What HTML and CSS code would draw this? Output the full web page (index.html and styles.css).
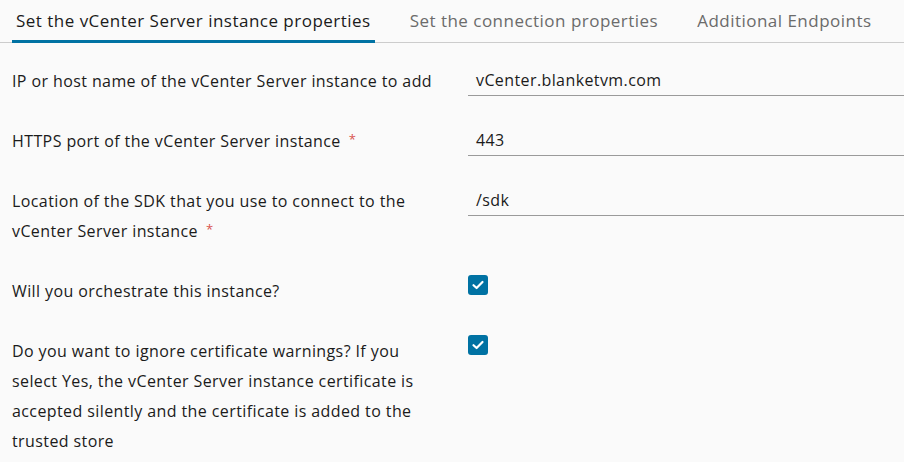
FILE: index.html
```html
<!DOCTYPE html>
<html lang="en">
<head>
<meta charset="utf-8">
<title>Add vCenter Server instance</title>
<link rel="stylesheet" href="styles.css">
</head>
<body>
<div class="page">
  <nav class="tabs">
    <div class="tab active">Set the vCenter Server instance properties</div>
    <div class="tab">Set the connection properties</div>
    <div class="tab">Additional Endpoints</div>
  </nav>
  <form class="form">
    <div class="row">
      <label class="label">IP or host name of the vCenter Server instance to add</label>
      <div class="control"><div class="input">vCenter.blanketvm.com</div></div>
    </div>
    <div class="row">
      <label class="label">HTTPS port of the vCenter Server instance<span class="req">*</span></label>
      <div class="control"><div class="input">443</div></div>
    </div>
    <div class="row">
      <label class="label">Location of the SDK that you use to connect to the vCenter Server instance<span class="req">*</span></label>
      <div class="control"><div class="input">/sdk</div></div>
    </div>
    <div class="row">
      <label class="label">Will you orchestrate this instance?</label>
      <div class="control"><span class="checkbox"><svg viewBox="0 0 20 20" width="20" height="20"><path d="M5.5 10.2 L8.6 13 L14.5 7" fill="none" stroke="#fff" stroke-width="2.2" stroke-linecap="round" stroke-linejoin="round"/></svg></span></div>
    </div>
    <div class="row">
      <label class="label">Do you want to ignore certificate warnings? If you select Yes, the vCenter Server instance certificate is accepted silently and the certificate is added to the trusted store</label>
      <div class="control"><span class="checkbox"><svg viewBox="0 0 20 20" width="20" height="20"><path d="M5.5 10.2 L8.6 13 L14.5 7" fill="none" stroke="#fff" stroke-width="2.2" stroke-linecap="round" stroke-linejoin="round"/></svg></span></div>
    </div>
  </form>
</div>
</body>
</html>
```
FILE: styles.css
```css
html, body {
  margin: 0;
  padding: 0;
  background: #fafafa;
}
body {
  font-family: "Open Sans", "Liberation Sans", sans-serif;
  font-size: 16px;
  letter-spacing: 0.4px;
  color: #1b1b1b;
  overflow: hidden;
}
.page {
  width: 904px;
  height: 462px;
}
.tabs {
  display: flex;
  gap: 31px;
  padding-left: 12px;
  height: 43px;
  box-sizing: border-box;
  border-bottom: 1px solid #cccccc;
}
.tab {
  padding: 0 4px;
  font-size: 17px;
  letter-spacing: 0.48px;
  line-height: 42px;
  height: 42px;
  color: #6b6b6b;
  white-space: nowrap;
  box-sizing: border-box;
}
.tab.active {
  color: #1b1b1b;
  box-shadow: inset 0 -3px 0 #0072a3;
  height: 43px;
  margin-bottom: -1px;
}
.form {
  display: flex;
  flex-direction: column;
  gap: 30px;
  padding: 23px 0 0 12px;
}
.row {
  display: flex;
  align-items: flex-start;
}
.label {
  width: 430px;
  flex: none;
  line-height: 30px;
  margin-right: 26px;
}
.req {
  display: inline-block;
  color: #d9534f;
  font-size: 13px;
  line-height: 13px;
  margin-left: 8px;
  vertical-align: 3px;
}
.control {
  flex: 1;
}
.input {
  height: 30px;
  line-height: 29px;
  box-sizing: border-box;
  border-bottom: 1px solid #9a9a9a;
  padding-left: 8px;
}
.checkbox {
  display: block;
  width: 20px;
  height: 20px;
  margin-top: -1px;
  border-radius: 3px;
  background: #0072a3;
}
.checkbox svg {
  display: block;
}
```
